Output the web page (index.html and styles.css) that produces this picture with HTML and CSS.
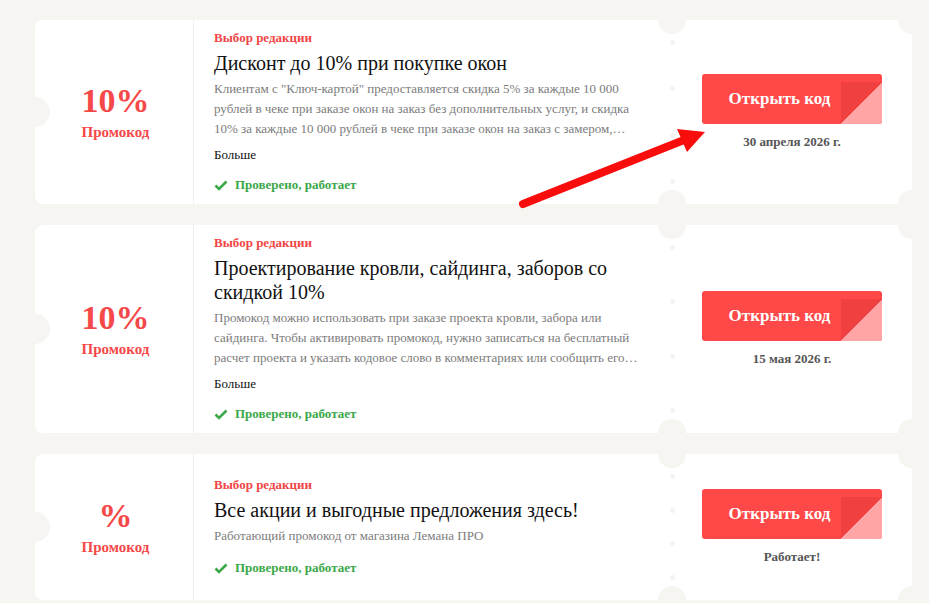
FILE: index.html
```html
<!DOCTYPE html>
<html lang="ru">
<head>
    <meta charset="UTF-8">
    <meta name="viewport" content="width=device-width, initial-scale=1.0">
    <title>Промокоды Лемана ПРО</title>
    <link rel="stylesheet" href="styles.css">
</head>
<body>
    <div class="coupons">
        <div class="coupon">
            <div class="coupon-value">
                <div class="amount">10%</div>
                <div class="kind">Промокод</div>
            </div>
            <div class="coupon-body">
                <div class="badge">Выбор редакции</div>
                <h2 class="title">Дисконт до 10% при покупке окон</h2>
                <p class="desc">Клиентам с "Ключ-картой" предоставляется скидка 5% за каждые 10 000 рублей в чеке при заказе окон на заказ без дополнительных услуг, и скидка 10% за каждые 10 000 рублей в чеке при заказе окон на заказ с замером,…</p>
                <a href="#" class="more">Больше</a>
                <div class="verified">
                    <svg width="14" height="11" viewBox="0 0 14 11"><polyline points="1.5,5.5 5,9 12.5,1.5" fill="none" stroke="#3ba84a" stroke-width="2.6"/></svg>
                    Проверено, работает
                </div>
            </div>
            <div class="coupon-action">
                <span class="perforation"><i></i><i></i><i></i><i></i></span>
                <button class="open-code">Открыть код<span class="fold"></span></button>
                <div class="expires">30 апреля 2026 г.</div>
            </div>
            <span class="notch notch-left"></span>
            <span class="notch notch-top"></span>
            <span class="notch notch-bottom"></span>
            <span class="notch corner-top"></span>
            <span class="notch corner-bottom"></span>
        </div>

        <div class="coupon">
            <div class="coupon-value">
                <div class="amount">10%</div>
                <div class="kind">Промокод</div>
            </div>
            <div class="coupon-body">
                <div class="badge">Выбор редакции</div>
                <h2 class="title">Проектирование кровли, сайдинга, заборов со скидкой 10%</h2>
                <p class="desc">Промокод можно использовать при заказе проекта кровли, забора или сайдинга. Чтобы активировать промокод, нужно записаться на бесплатный расчет проекта и указать кодовое слово в комментариях или сообщить его…</p>
                <a href="#" class="more">Больше</a>
                <div class="verified">
                    <svg width="14" height="11" viewBox="0 0 14 11"><polyline points="1.5,5.5 5,9 12.5,1.5" fill="none" stroke="#3ba84a" stroke-width="2.6"/></svg>
                    Проверено, работает
                </div>
            </div>
            <div class="coupon-action">
                <span class="perforation"><i></i><i></i><i></i><i></i></span>
                <button class="open-code">Открыть код<span class="fold"></span></button>
                <div class="expires">15 мая 2026 г.</div>
            </div>
            <span class="notch notch-left"></span>
            <span class="notch notch-top"></span>
            <span class="notch notch-bottom"></span>
            <span class="notch corner-top"></span>
            <span class="notch corner-bottom"></span>
        </div>

        <div class="coupon">
            <div class="coupon-value">
                <div class="amount">%</div>
                <div class="kind">Промокод</div>
            </div>
            <div class="coupon-body">
                <div class="badge">Выбор редакции</div>
                <h2 class="title">Все акции и выгодные предложения здесь!</h2>
                <p class="desc">Работающий промокод от магазина Лемана ПРО</p>
                <div class="verified">
                    <svg width="14" height="11" viewBox="0 0 14 11"><polyline points="1.5,5.5 5,9 12.5,1.5" fill="none" stroke="#3ba84a" stroke-width="2.6"/></svg>
                    Проверено, работает
                </div>
            </div>
            <div class="coupon-action">
                <span class="perforation"><i></i><i></i><i></i><i></i></span>
                <button class="open-code">Открыть код<span class="fold"></span></button>
                <div class="expires">Работает!</div>
            </div>
            <span class="notch notch-left"></span>
            <span class="notch notch-top"></span>
            <span class="notch notch-bottom"></span>
            <span class="notch corner-top"></span>
            <span class="notch corner-bottom"></span>
        </div>
    </div>

    <!-- red pointer drawn over the first coupon -->
    <svg class="pointer" width="929" height="603" viewBox="0 0 929 603">
        <line x1="523" y1="204" x2="684" y2="140" stroke="#f80c0c" stroke-width="8" stroke-linecap="round"/>
        <polygon points="677,129 705,132 687,152" fill="#f80c0c"/>
    </svg>
</body>
</html>
```

FILE: styles.css
```css
body {
    margin: 0;
    padding: 20px 17px 0 35px;
    background-color: #f6f5f1;
    font-family: "Liberation Serif", "Times New Roman", serif;
    position: relative;
    overflow: hidden;
}

.coupons {
    display: flex;
    flex-direction: column;
    gap: 21px;
}

.coupon {
    position: relative;
    display: grid;
    grid-template-columns: 159px 478px 240px;
    min-height: 146px;
    background-color: #fff;
    border-radius: 8px 0 0 8px;
}

/* left part with the value */
.coupon-value {
    display: flex;
    flex-direction: column;
    justify-content: center;
    align-items: center;
    padding-left: 3px;
    border-right: 1px solid #efeeea;
    color: #f54848;
    font-weight: 700;
}

.amount {
    font-size: 34px;
    line-height: 36px;
}

.kind {
    font-size: 15px;
    line-height: 18px;
    margin-top: 4px;
}

/* middle part */
.coupon-body {
    display: flex;
    flex-direction: column;
    justify-content: center;
    align-items: flex-start;
    padding: 10px 20px 11px 20px;
}

.badge {
    color: #f04646;
    font-size: 13px;
    font-weight: 700;
    line-height: 16px;
}

.title {
    margin: 5px 0 0 0;
    font-size: 20px;
    font-weight: 400;
    line-height: 24px;
    color: #111;
}

.desc {
    margin: 4px 0 0 0;
    font-size: 13px;
    line-height: 20px;
    color: #7c7c7c;
}

.more {
    margin-top: 8px;
    font-size: 13px;
    line-height: 16px;
    color: #111;
    text-decoration: none;
}

.verified {
    display: flex;
    align-items: center;
    gap: 7px;
    margin-top: 14px;
    font-size: 13px;
    font-weight: 700;
    line-height: 16px;
    color: #3ba84a;
}

/* right part with the button */
.coupon-action {
    position: relative;
    display: flex;
    flex-direction: column;
    justify-content: center;
    align-items: center;
}

.perforation {
    position: absolute;
    left: -2px;
    top: 0;
    bottom: 0;
    padding: 20px 0;
    display: flex;
    flex-direction: column;
    justify-content: space-between;
}

.perforation i {
    display: block;
    width: 5px;
    height: 5px;
    border-radius: 50%;
    background-color: #f4f3ef;
}

.open-code {
    position: relative;
    overflow: hidden;
    width: 180px;
    height: 50px;
    padding: 0 25px 0 0;
    border: none;
    border-radius: 3px;
    background-color: #ff4848;
    color: #fff;
    font-family: "Liberation Serif", "Times New Roman", serif;
    font-size: 17px;
    font-weight: 700;
    cursor: pointer;
}

.fold {
    position: absolute;
    right: 0;
    bottom: 0;
    width: 41px;
    height: 42px;
    background: linear-gradient(to bottom right, #f04040 50%, #ffa5a5 50%);
}

.expires {
    margin-top: 10px;
    font-size: 13px;
    font-weight: 700;
    line-height: 16px;
    color: #555;
}

/* ticket cut-outs */
.notch {
    position: absolute;
    width: 28px;
    height: 28px;
    border-radius: 50%;
    background-color: #f6f5f1;
}

.notch-left {
    left: -15px;
    top: calc(50% - 15px);
    width: 30px;
    height: 30px;
}

.notch-top {
    left: 623px;
    top: -14px;
}

.notch-bottom {
    left: 623px;
    bottom: -14px;
}

.corner-top {
    right: -14px;
    top: -14px;
}

.corner-bottom {
    right: -14px;
    bottom: -14px;
}

.pointer {
    position: absolute;
    left: 0;
    top: 0;
    pointer-events: none;
}
```
